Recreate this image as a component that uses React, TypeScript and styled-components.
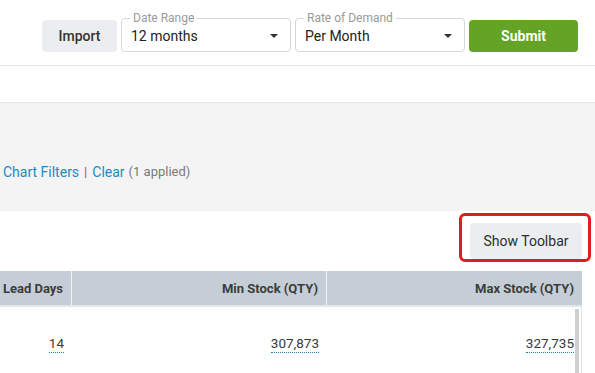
import styled, { createGlobalStyle } from "styled-components";

const GlobalStyle = createGlobalStyle`
  html, body {
    margin: 0;
    padding: 0;
    background: #ffffff;
    font-family: Roboto, "Liberation Sans", Arial, sans-serif;
    color: #333333;
    overflow: hidden;
  }
`;

const Page = styled.div`
  width: 595px;
  height: 373px;
  overflow: hidden;
`;

const Header = styled.div`
  height: 66px;
  box-sizing: border-box;
  padding: 0 17px 13px 0;
  display: flex;
  align-items: flex-end;
  justify-content: flex-end;
  gap: 4px;
  border-bottom: 1px solid #e6e6e6;
`;

const GreyButton = styled.button`
  height: 32px;
  padding: 0;
  border: none;
  border-radius: 4px;
  background: #ebedf0;
  color: #333333;
  font-family: inherit;
  font-size: 14px;
  font-weight: 500;
  white-space: nowrap;
  cursor: pointer;
`;

const ImportButton = styled(GreyButton)`
  width: 75px;
`;

const SubmitButton = styled.button`
  width: 109px;
  height: 32px;
  border: none;
  border-radius: 4px;
  background: #64a325;
  color: #ffffff;
  font-family: inherit;
  font-size: 14px;
  font-weight: 700;
`;

const SelectBox = styled.div`
  position: relative;
  width: 170px;
  height: 34px;
  box-sizing: border-box;
  border: 1px solid #d6d6d6;
  border-radius: 4px;
  display: flex;
  align-items: center;
  justify-content: space-between;
  padding: 0 12px 0 9px;
`;

const SelectLabel = styled.span`
  position: absolute;
  top: -8px;
  left: 8px;
  padding: 0 3px;
  background: #ffffff;
  font-size: 12px;
  line-height: 14px;
  color: #9a9a9a;
`;

const SelectValue = styled.span`
  font-size: 14px;
  color: #222222;
  margin-top: 1px;
`;

const Caret = styled.span`
  width: 0;
  height: 0;
  border-left: 4px solid transparent;
  border-right: 4px solid transparent;
  border-top: 4px solid #333333;
  margin-top: 1px;
`;

const Spacer = styled.div`
  height: 36px;
`;

const FilterPanel = styled.div`
  height: 109px;
  box-sizing: border-box;
  background: #f4f4f4;
  border-top: 1px solid #e2e2e2;
  display: flex;
  align-items: flex-end;
  padding: 0 0 29px 3px;
  font-size: 14px;
  line-height: 20px;
`;

const LinkText = styled.span`
  color: #1b8ac8;
`;

const Divider = styled.span`
  color: #8a5a6a;
  margin: 0 5px;
  font-size: 13px;
`;

const Applied = styled.span`
  color: #7a7a7a;
  font-size: 13px;
  margin-left: 4px;
`;

const ToolbarRow = styled.div`
  height: 60px;
  box-sizing: border-box;
  display: flex;
  justify-content: flex-end;
  align-items: flex-start;
  padding: 12px 13px 0 0;
`;

const Highlight = styled.div`
  position: relative;
`;

const HighlightRing = styled.div`
  position: absolute;
  left: -11px;
  top: -10px;
  right: -9px;
  bottom: -3px;
  border: 3px solid #e21b1b;
  border-radius: 6px;
  pointer-events: none;
`;

const ToolbarButton = styled(GreyButton)`
  display: block;
  width: 112px;
  height: 36px;
  font-weight: 400;
  color: #2e2e2e;
`;

const Table = styled.div`
  width: 582px;
`;

const Row = styled.div`
  display: grid;
  grid-template-columns: 72px 255px 255px;
`;

const HeadRow = styled(Row)`
  height: 34px;
  background: #c5ced6;
  border-bottom: 2px solid #e4e7ea;
`;

const HeadCell = styled.div<{ last?: boolean }>`
  display: flex;
  align-items: center;
  justify-content: flex-end;
  padding-right: 8px;
  font-size: 13px;
  font-weight: 700;
  color: #3c3c3c;
  border-right: ${({ last }) => (last ? "none" : "1px solid #f2f4f6")};
`;

const Body = styled.div`
  position: relative;
  border-right: 1px solid #e2e2e2;
`;

const BodyRow = styled(Row)`
  height: 72px;
`;

const Cell = styled.div`
  display: flex;
  align-items: center;
  justify-content: flex-end;
  padding-right: 8px;
`;

const Value = styled.span`
  font-size: 13.5px;
  line-height: 16px;
  color: #3a3a3a;
  padding-bottom: 1px;
  border-bottom: 1px dotted #1f7fa6;
  margin-top: 2px;
`;

const ScrollThumb = styled.div`
  position: absolute;
  top: 2px;
  right: 2px;
  width: 4px;
  height: 100px;
  background: #cfcfcf;
`;

const rows = [{ lead: "14", min: "307,873", max: "327,735" }];

export default function App() {
  return (
    <Page>
      <GlobalStyle />
      <Header>
        <ImportButton>Import</ImportButton>
        <SelectBox>
          <SelectLabel>Date Range</SelectLabel>
          <SelectValue>12 months</SelectValue>
          <Caret />
        </SelectBox>
        <SelectBox>
          <SelectLabel>Rate of Demand</SelectLabel>
          <SelectValue>Per Month</SelectValue>
          <Caret />
        </SelectBox>
        <SubmitButton>Submit</SubmitButton>
      </Header>
      <Spacer />
      <FilterPanel>
        <LinkText>Chart Filters</LinkText>
        <Divider>|</Divider>
        <LinkText>Clear</LinkText>
        <Applied>(1 applied)</Applied>
      </FilterPanel>
      <ToolbarRow>
        <Highlight>
          <ToolbarButton>Show Toolbar</ToolbarButton>
          <HighlightRing />
        </Highlight>
      </ToolbarRow>
      <Table>
        <HeadRow>
          <HeadCell>Lead Days</HeadCell>
          <HeadCell>Min Stock (QTY)</HeadCell>
          <HeadCell last>Max Stock (QTY)</HeadCell>
        </HeadRow>
        <Body>
          {rows.map((r, i) => (
            <BodyRow key={i}>
              <Cell>
                <Value>{r.lead}</Value>
              </Cell>
              <Cell>
                <Value>{r.min}</Value>
              </Cell>
              <Cell>
                <Value>{r.max}</Value>
              </Cell>
            </BodyRow>
          ))}
          <ScrollThumb />
        </Body>
      </Table>
    </Page>
  );
}
